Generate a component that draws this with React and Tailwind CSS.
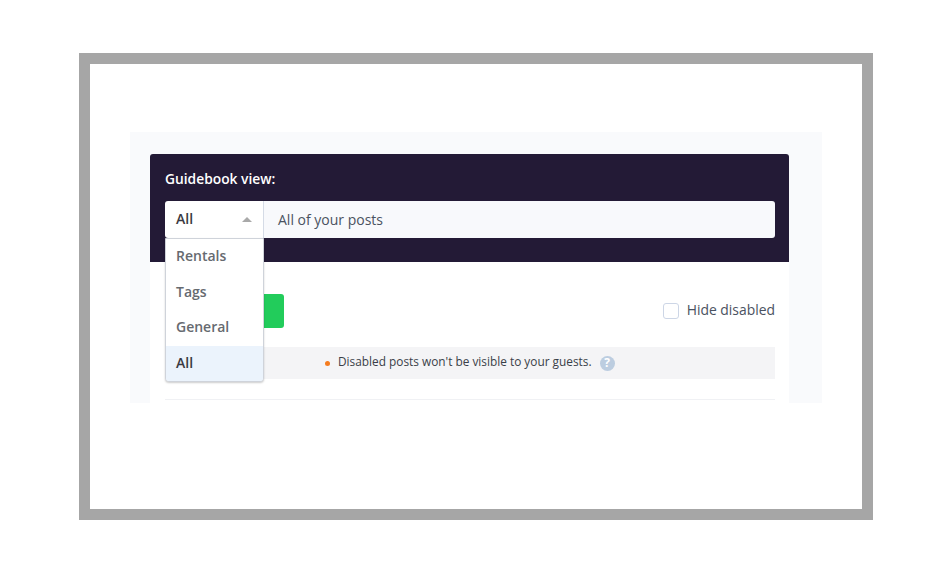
import React from 'react';

const font = "font-['Open_Sans',sans-serif]";

const App = () => {
  const options = ['Rentals', 'Tags', 'General'];

  return (
    <div className={`w-[940px] h-[578px] bg-white pt-[53px] pl-[79px] ${font}`}>
      <div className="w-[794px] h-[467px] border-[11px] border-[#a6a6a6] bg-white pt-[68px] px-[40px]">
        <div className="h-[271px] bg-[#f9fafc] px-[20px] pt-[22px] overflow-hidden">
          <div className="w-[639px] bg-white rounded-t-[3px]">
            <div className="relative h-[108px] bg-[#231a36] rounded-t-[3px] pl-[15px] pr-[14px] pt-[15px]">
              <p className="text-[13.8px] leading-[20px] font-semibold text-white">Guidebook view:</p>
              <div className="flex mt-[12px] h-[37px]">
                <div className="w-[99px] bg-white rounded-l-[3px] border-r border-[#d5dbe6] flex items-center justify-between pl-[11px] pr-[11px]">
                  <span className="text-[14px] font-semibold text-[#3a3a42] -mt-[2px]">All</span>
                  <span className="w-0 h-0 border-x-[5px] border-x-transparent border-b-[5px] border-b-[#a9a9a9]"></span>
                </div>
                <div className="flex-1 bg-[#f8f9fc] rounded-r-[3px] flex items-center pl-[14px] text-[14px] text-[#4a5261]">
                  All of your posts
                </div>
              </div>
              <div className="absolute left-[15px] top-[84px] w-[99px] z-10 bg-white border border-[#cfd3da] rounded-b-[4px] shadow-[0_1px_2px_rgba(0,0,0,0.2)] overflow-hidden">
                {options.map((o) => (
                  <div key={o} className="h-[35.5px] flex items-center pl-[10px] pb-[2px] text-[14px] font-semibold text-[#666a70]">{o}</div>
                ))}
                <div className="h-[35.5px] flex items-center pl-[10px] pb-[2px] text-[14px] font-semibold text-[#3a3a42] bg-[#ebf3fc]">All</div>
              </div>
            </div>
            <div className="pl-[15px] pr-[14px] pt-[32px] pb-[3px]">
              <div className="flex items-center justify-between h-[34px]">
                <div className="w-[119px] h-[34px] bg-[#22cc5b] rounded-[3px]"></div>
                <label className="flex items-center gap-[8px]">
                  <span className="w-[16px] h-[16px] bg-white border border-[#cdd6e6] rounded-[3px]"></span>
                  <span className="text-[13.9px] leading-[20px] text-[#4a5261] -mt-[3px]">Hide disabled</span>
                </label>
              </div>
              <div className="mt-[19px] h-[32px] bg-[#f4f4f6] flex items-center pl-[160px] text-[11.85px] text-[#3a3f48]">
                <span className="w-[5px] h-[5px] rounded-full bg-[#f57c1f] mr-[8px]"></span>
                <span className="-mt-[2px]">Disabled posts won't be visible to your guests.</span>
                <span className="ml-[8px] w-[15px] h-[15px] rounded-full bg-[#bccde0] text-white text-[12px] font-bold flex items-center justify-center">?</span>
              </div>
              <div className="mt-[20px] border-t border-[#f0f1f4]"></div>
            </div>
          </div>
        </div>
      </div>
    </div>
  );
};

export default App;
